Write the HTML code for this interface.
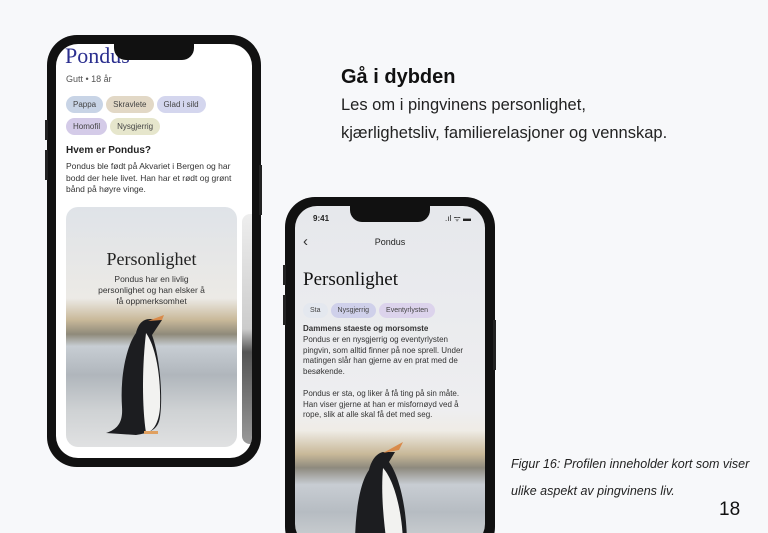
<!DOCTYPE html>
<html><head><meta charset="utf-8"><style>
*{margin:0;padding:0;box-sizing:border-box}
html,body{width:768px;height:533px;overflow:hidden}
body{background:#f7f8fa;position:relative;font-family:"Liberation Sans",sans-serif;color:#222}
.abs{position:absolute}
.phone{position:absolute;background:#111;border-radius:30px}
.screen{position:absolute;overflow:hidden;background:#fff;border-radius:22px}
.notch{position:absolute;background:#111;border-radius:0 0 12px 12px}
.chip{display:inline-block;font-size:8px;padding:4px 7px;border-radius:10px;margin-right:3px;color:#444}
.t{font-size:8.5px;line-height:11.5px;color:#333}
.serif{font-family:"Liberation Serif",serif}
</style></head><body>

<div class="abs" style="left:341px;top:66px;font-size:20px;font-weight:bold;color:#111">Gå i dybden</div>
<div class="abs" style="left:341px;top:91px;font-size:16.5px;line-height:28px;color:#222">Les om i pingvinens personlighet,<br>kjærlighetsliv, familierelasjoner og vennskap.</div>
<div class="abs" style="left:511px;top:451px;font-size:12.5px;line-height:27px;font-style:italic;color:#222">Figur 16: Profilen inneholder kort som viser<br>ulike aspekt av pingvinens liv.</div>
<div class="abs" style="left:719px;top:499px;font-size:19px;color:#111">18</div>

<!-- phone 1 -->
<div class="phone" style="left:47px;top:35px;width:214px;height:432px"></div>
<div class="abs" style="left:45px;top:120px;width:3px;height:20px;background:#222"></div>
<div class="abs" style="left:45px;top:150px;width:3px;height:30px;background:#222"></div>
<div class="abs" style="left:259px;top:165px;width:3px;height:50px;background:#222"></div>
<div class="screen" style="left:56px;top:44px;width:196px;height:414px">
  <div class="abs serif" style="left:9px;top:-1px;font-size:22px;color:#2b2f8f">Pondus</div>
  <div class="abs" style="left:10px;top:30px;font-size:9px;color:#555">Gutt • 18 år</div>
  <div class="abs" style="left:10px;top:50px;width:190px">
    <span class="chip" style="background:#c8d4e6">Pappa</span><span class="chip" style="background:#e2d8c6">Skravlete</span><span class="chip" style="background:#d4d6ee">Glad i sild</span>
  </div>
  <div class="abs" style="left:10px;top:72px;width:190px">
    <span class="chip" style="background:#d4cbe8">Homofil</span><span class="chip" style="background:#e6e6cc">Nysgjerrig</span>
  </div>
  <div class="abs" style="left:10px;top:101px;font-size:10px;font-weight:bold;color:#222">Hvem er Pondus?</div>
  <div class="abs t" style="left:10px;top:117px;width:182px">Pondus ble født på Akvariet i Bergen og har bodd der hele livet. Han har et rødt og grønt bånd på høyre vinge.</div>
  <div class="abs" style="left:10px;top:163px;width:171px;height:240px;border-radius:12px;overflow:hidden;background:linear-gradient(#dfe3e8 0%,#eceae6 38%,#c9b99a 47%,#8f8a7a 53%,#c7cdd3 58%,#b0b6bc 70%,#cfd2d4 85%,#e0e1e2 100%)">
    <svg class="abs" style="left:0;top:0" width="171" height="240" viewBox="0 0 171 240">
      <path d="M96 113 L84 112 C76 112 72 118 70 126 C60 140 54 170 56 200 C57 215 52 222 40 226 L70 228 C82 226 92 224 94 210 C97 190 94 150 86 128 Z" fill="#1c1d20"/>
      <path d="M80 126 C90 140 95 170 94 200 C93 215 88 224 80 226 C76 200 76 160 80 126Z" fill="#f2f2f0"/>
      <path d="M82 114 L98 108 L96 113 Z" fill="#d98a4a"/>
      <rect x="78" y="224" width="14" height="3" fill="#e0a060"/>
    </svg>
    <div class="abs serif" style="left:0;width:171px;top:42px;text-align:center;font-size:18px;color:#222">Personlighet</div>
    <div class="abs" style="left:0;width:171px;top:67px;text-align:center;font-size:8.5px;line-height:11px;color:#333">Pondus har en livlig<br>personlighet og han elsker å<br>få oppmerksomhet</div>
  </div>
  <div class="abs" style="left:186px;top:170px;width:20px;height:230px;border-radius:8px;background:linear-gradient(#eee,#ccc 50%,#555 60%,#999)"></div>
  <div class="notch" style="left:58px;top:0;width:80px;height:16px"></div>
</div>

<!-- phone 2 -->
<div class="phone" style="left:285px;top:197px;width:210px;height:360px"></div>
<div class="abs" style="left:283px;top:265px;width:3px;height:20px;background:#222"></div>
<div class="abs" style="left:283px;top:295px;width:3px;height:30px;background:#222"></div>
<div class="abs" style="left:493px;top:320px;width:3px;height:50px;background:#222"></div>
<div class="screen" style="left:295px;top:206px;width:190px;height:340px;background:linear-gradient(#e6e8ec 0%,#eeeef0 60%,#efece6 66%,#c8b898 73%,#8e8a7e 77%,#c8cdd3 82%,#b6bcc2 90%,#cfd2d4 100%)">
  <div class="abs" style="left:18px;top:8px;font-size:8px;font-weight:bold;color:#222">9:41</div>
  <div class="abs" style="left:150px;top:7px;font-size:8px;color:#222">.ıl ᯤ ▬</div>
  <div class="notch" style="left:55px;top:0;width:80px;height:16px"></div>
  <div class="abs" style="left:8px;top:27px;font-size:15px;color:#333">‹</div>
  <div class="abs" style="left:0;width:190px;top:31px;text-align:center;font-size:9px;color:#222">Pondus</div>
  <div class="abs serif" style="left:8px;top:63px;font-size:19px;color:#111">Personlighet</div>
  <div class="abs" style="left:8px;top:93px;width:190px">
    <span class="chip" style="background:#e4e8ef;font-size:7px">Sta</span><span class="chip" style="background:#cfd0ea;font-size:7px">Nysgjerrig</span><span class="chip" style="background:#dcd3ec;font-size:7px">Eventyrlysten</span>
  </div>
  <div class="abs t" style="left:8px;top:118px;width:168px;font-size:8px;line-height:10.8px"><b>Dammens staeste og morsomste</b><br>Pondus er en nysgjerrig og eventyrlysten pingvin, som alltid finner på noe sprell. Under matingen slår han gjerne av en prat med de besøkende.<br><br>Pondus er sta, og liker å få ting på sin måte. Han viser gjerne at han er misfornøyd ved å rope, slik at alle skal få det med seg.</div>
  <svg class="abs" style="left:0;top:0" width="190" height="340" viewBox="0 0 190 340">
    <path d="M100 246 L88 246 C80 248 76 256 74 264 C64 278 60 310 60 340 L112 340 C112 300 104 270 94 256 Z" fill="#1c1d20"/>
    <path d="M88 262 C100 275 108 310 108 340 L92 340 C88 310 86 285 88 262Z" fill="#f2f2f0"/>
    <path d="M88 247 L108 236 L104 244 Z" fill="#d98a4a"/>
  </svg>
</div>
</body></html>
